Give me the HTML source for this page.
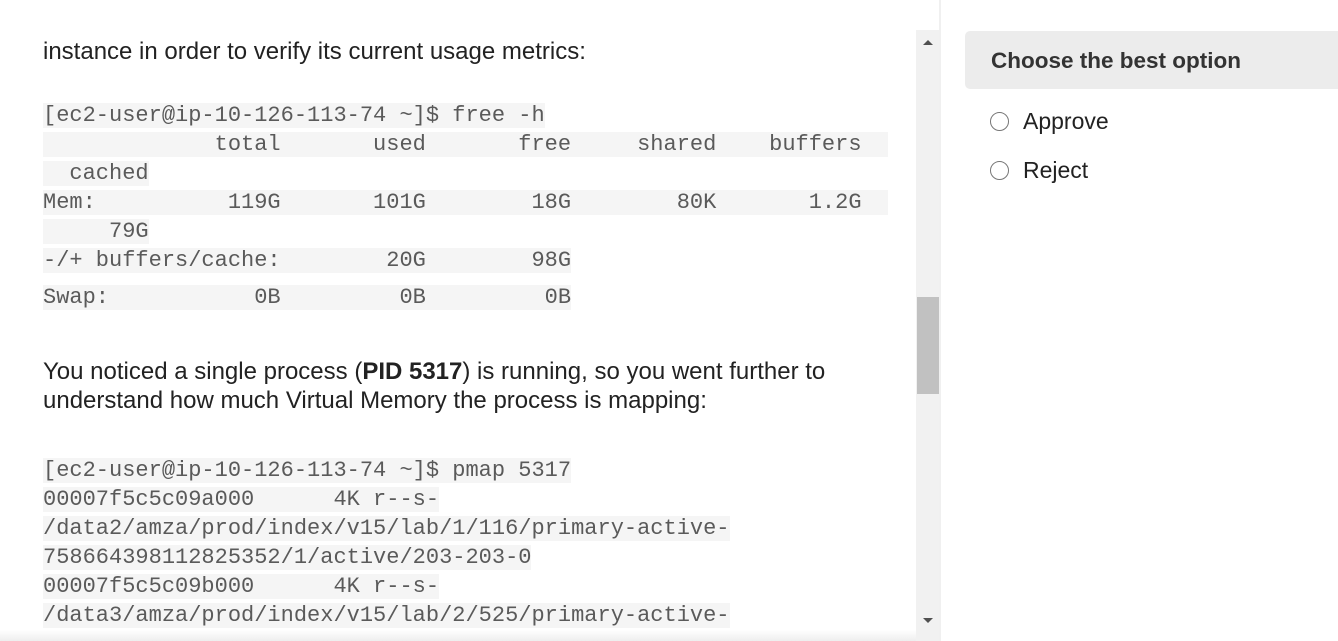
<!DOCTYPE html>
<html><head><style>
body{margin:0;width:1338px;height:641px;overflow:hidden;background:#fff;position:relative;font-family:"Liberation Sans",Arial,sans-serif;}
.p{position:absolute;left:43px;font-size:24px;color:#222;line-height:29px;white-space:nowrap}
.m{position:absolute;left:43px;font-family:"Liberation Mono",monospace;font-size:22px;line-height:29px;height:29px;white-space:pre;color:#5a5a5a}
.m span{background:#f5f5f5;display:inline-block;height:25px;line-height:25px;vertical-align:top;margin-top:2px}
</style></head><body>
<div class="p" style="top:37px">instance in order to verify its current usage metrics:</div>
<div class="m" style="top:101px"><span>[ec2-user@ip-10-126-113-74 ~]$ free -h</span></div>
<div class="m" style="top:130px"><span>             total       used       free     shared    buffers  </span></div>
<div class="m" style="top:159px"><span>  cached</span></div>
<div class="m" style="top:188px"><span>Mem:          119G       101G        18G        80K       1.2G  </span></div>
<div class="m" style="top:217px"><span>     79G</span></div>
<div class="m" style="top:246px"><span>-/+ buffers/cache:        20G        98G</span></div>
<div class="m" style="top:283px"><span>Swap:           0B         0B         0B</span></div>
<div class="p" style="top:357px">You noticed a single process (<b>PID 5317</b>) is running, so you went further to</div>
<div class="p" style="top:386px">understand how much Virtual Memory the process is mapping:</div>
<div class="m" style="top:456px"><span>[ec2-user@ip-10-126-113-74 ~]$ pmap 5317</span></div>
<div class="m" style="top:485px"><span>00007f5c5c09a000      4K r--s-</span></div>
<div class="m" style="top:514px"><span>/data2/amza/prod/index/v15/lab/1/116/primary-active-</span></div>
<div class="m" style="top:543px"><span>758664398112825352/1/active/203-203-0</span></div>
<div class="m" style="top:572px"><span>00007f5c5c09b000      4K r--s-</span></div>
<div class="m" style="top:601px"><span>/data3/amza/prod/index/v15/lab/2/525/primary-active-</span></div>
<!-- scrollbar -->
<div style="position:absolute;left:916px;top:30px;width:23px;height:611px;background:#f1f1f1"></div>
<div style="position:absolute;left:923px;top:40px;width:0;height:0;border-left:5px solid transparent;border-right:5px solid transparent;border-bottom:5px solid #505050"></div>
<div style="position:absolute;left:923px;top:618px;width:0;height:0;border-left:5px solid transparent;border-right:5px solid transparent;border-top:5px solid #505050"></div>
<div style="position:absolute;left:917px;top:297px;width:22px;height:97px;background:#c1c1c1"></div>
<div style="position:absolute;left:939px;top:0;width:2px;height:641px;background:#f0f0f0"></div>
<div style="position:absolute;left:0;top:630px;width:916px;height:11px;background:linear-gradient(#fff,#eee)"></div>
<!-- right panel -->
<div style="position:absolute;left:965px;top:31px;width:373px;height:58px;background:#ececec;border-radius:5px 0 0 5px"></div>
<div style="position:absolute;left:991px;top:46px;font-size:22.5px;font-weight:bold;color:#333;line-height:29px">Choose the best option</div>
<div style="position:absolute;left:990px;top:112px;width:19px;height:19px;border:1px solid #777;border-radius:50%;box-sizing:border-box"></div>
<div style="position:absolute;left:1023px;top:107px;font-size:23px;color:#222;line-height:29px">Approve</div>
<div style="position:absolute;left:990px;top:161px;width:19px;height:19px;border:1px solid #777;border-radius:50%;box-sizing:border-box"></div>
<div style="position:absolute;left:1023px;top:156px;font-size:23px;color:#222;line-height:29px">Reject</div>
</body></html>
